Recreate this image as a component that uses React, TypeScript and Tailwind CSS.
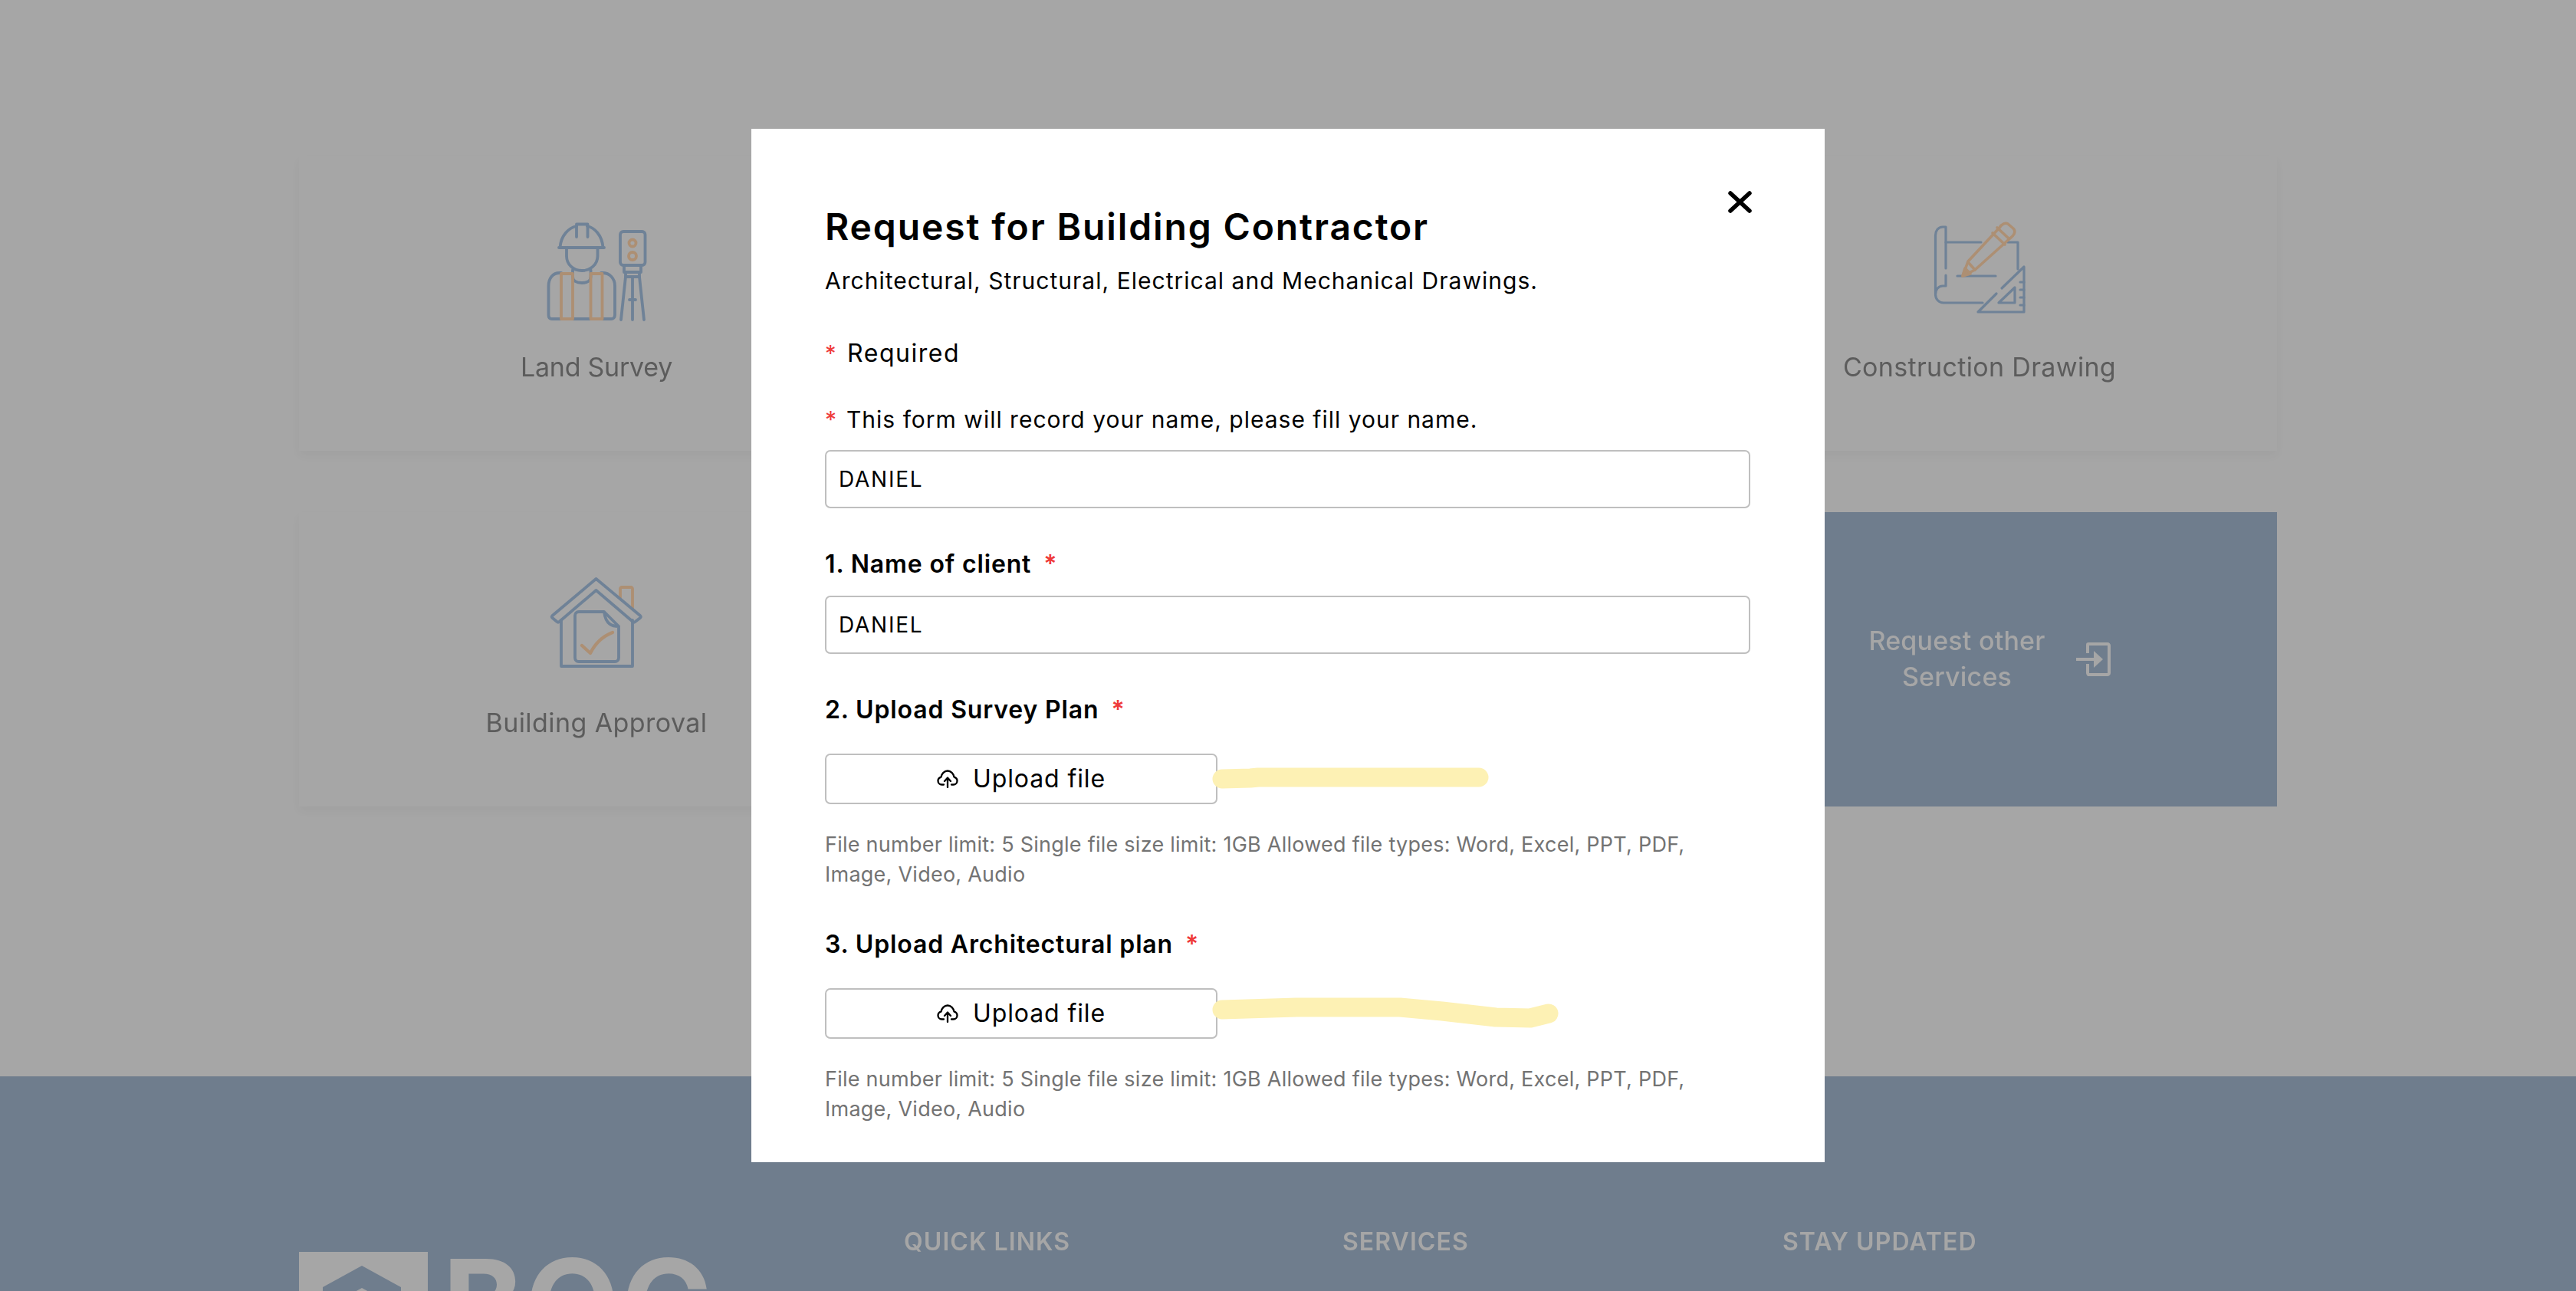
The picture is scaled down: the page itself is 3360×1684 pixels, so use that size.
import React from "react";

const B = "#6f8297";
const O = "#ad8f73";
const F = "#6f7d8d";

function SurveyIcon() {
  return (
    <svg width="134" height="133" viewBox="710 285 134 133" fill="none" strokeWidth="3.800" strokeLinecap="round" strokeLinejoin="round">
      <g stroke={B}>
        <path d="M729.500 320C730.500 304 741 294 751 292M785.500 320C784.500 304 774.500 294 765 292" />
        <path d="M751 306V289.500H765.500V306" />
        <path d="M728 320H787" />
        <path d="M738 320V331C738 342 747 350 758 350C769 350 778.500 342 778.500 331V320" />
        <path d="M746 349V358C746 363 751 366 758 366C765 366 769.500 363 769.500 358V349" />
        <path d="M731 353H729C720 353 714.500 360 714.500 370V408C714.500 411 716 413 719 413H796C799 413 801 411 801 408V370C801 360 794 353 785 353H783" />
        <rect x="808" y="299" width="32.500" height="44" rx="4" />
        <path d="M813 344V352H835V344M815 352V358H833V352" />
        <path d="M815 358L809 414M833 358L839 414M824 358V414M820 388H828" />
      </g>
      <g stroke={O}>
        <rect x="731" y="354" width="15" height="59" />
        <rect x="769.500" y="354" width="15" height="59" />
        <circle cx="824" cy="314" r="4.500" />
        <circle cx="824" cy="331" r="5" />
      </g>
    </svg>
  );
}

function HouseIcon() {
  return (
    <svg width="124" height="120" viewBox="715 750 124 120" fill="none" strokeWidth="3.800" strokeLinecap="round" strokeLinejoin="round">
      <path stroke={O} d="M808 778V766C808 765 809 764 810 764H822C823 764 824 765 824 766V792" />
      <g stroke={B}>
        <path d="M776.500 753L719.500 801C718.500 802 718.500 803 719.500 804L725.500 809C726.500 810 727.500 810 728.500 809L776.500 768L824.500 809C825.500 810 826.500 810 827.500 809L834 804C835 803 835 802 834 801Z" />
        <path d="M731 807V867H824V807" />
        <path d="M787 796H754C751 796 749 798 749 801V856C749 859 751 861 754 861H801C804 861 806 859 806 856V815C798 815 789 813 787 796L806 815" />
      </g>
      <path stroke={O} strokeWidth="4.200" d="M758 840L769 850C775 838 785 828 798 823" />
    </svg>
  );
}

function DrawingIcon() {
  return (
    <svg width="124" height="122" viewBox="2521 285 124 122" fill="none" strokeWidth="3.200" strokeLinecap="round" strokeLinejoin="round">
      <g stroke={B}>
        <path d="M2539 347V293H2535C2529 293 2525.500 298 2525.500 304V380" />
        <path d="M2539 356V370H2535C2529 370 2525.500 375 2525.500 381C2525.500 387 2530 392 2536 392H2587" />
        <path d="M2539 313H2585M2620 313H2633V348" />
        <path d="M2554 357H2604" />
        <path d="M2641 345V404H2581L2605 380M2612 373L2641 345" />
        <path d="M2629 372V392H2608Z" />
        <path d="M2636 365H2641M2636 375H2641M2636 385H2641M2636 395H2641" />
      </g>
      <g stroke={O} strokeWidth="3.600">
        <path d="M2561 357L2568 338L2609 294C2612 289 2617 287 2620 289L2627 295C2630 298 2629 302 2626 305L2577 349Z" />
        <path d="M2600 301L2616 316M2606 294L2621 308" />
        <path d="M2568 339L2577 349" />
        <path d="M2561 357L2564 347L2571 354Z" fill={O} />
      </g>
    </svg>
  );
}

function ArrowInIcon() {
  return (
    <svg width="46" height="46" viewBox="2706 837 46 46" fill="none" stroke="#a6a6a6" strokeWidth="4">
      <path strokeLinejoin="round" d="M2722 852V841C2722 840 2723 840 2723 840H2748C2749 840 2750 841 2750 842V878C2750 879 2749 880 2748 880H2723C2723 880 2722 879 2722 878V866" />
      <path d="M2707 860H2732" />
      <path fill="#a6a6a6" stroke="none" d="M2730 849L2742 860L2730 871Z" />
    </svg>
  );
}

function UploadIcon() {
  return (
    <svg width="28" height="24" viewBox="0 0 28 24" fill="none" stroke="#000" strokeWidth="2.300" strokeLinecap="round" strokeLinejoin="round">
      <path d="M9 19.500H6.500C3.500 19.500 1.500 17.200 1.500 14.500C1.500 12 3.200 10.200 5.500 9.600C6.200 5 9.800 1.500 14 1.500C18.200 1.500 21.800 5 22.500 9.600C24.800 10.200 26.500 12 26.500 14.500C26.500 17.200 24.500 19.500 21.500 19.500H19" />
      <path d="M14 23V11M10 15L14 10.500L18 15" />
    </svg>
  );
}

function Star({ className }: { className: string }) {
  return <span className={`text-[#ef3a3a] ${className}`}>*</span>;
}

function ServiceCard({ icon, label, tracking }: { icon: React.ReactNode; label: string; tracking: string }) {
  return (
    <div className="flex flex-col items-center bg-[#a6a6a6] pt-[84px] shadow-[0_6px_12px_rgba(0,0,0,0.035)]">
      <div className="flex h-[169px] items-start justify-center">{icon}</div>
      <div className={`text-[34px] leading-[44px] text-[#5c5c5c] ${tracking}`}>{label}</div>
    </div>
  );
}

function Heading({ children }: { children: React.ReactNode }) {
  return <div className="text-[32px] font-semibold leading-[44px] tracking-[1.05px] text-[#a6a6a6]">{children}</div>;
}

function Field({ className }: { className: string }) {
  return (
    <div className={`flex h-[76px] items-center rounded-[7px] border-2 border-[#bfbfbf] px-4 text-[28px] tracking-[1.75px] text-black ${className}`}>
      DANIEL
    </div>
  );
}

function Label({ text, className }: { text: string; className: string }) {
  return (
    <div className={`flex text-[32px] font-semibold leading-[44px] tracking-[0.85px] text-black ${className}`}>
      {text}
      <Star className="ml-[16px]" />
    </div>
  );
}

function UploadButton({ className, children }: { className: string; children: React.ReactNode }) {
  return (
    <div className={`relative ${className}`}>
      <div className="flex h-[66px] w-[512px] items-center justify-center gap-[19px] rounded-[7px] border-2 border-[#bfbfbf] text-[32px] tracking-[0.9px] text-black">
        <UploadIcon />
        <span>Upload file</span>
      </div>
      {children}
    </div>
  );
}

function Hint({ className }: { className: string }) {
  return (
    <p className={`w-[1180px] text-[27px] leading-[39px] tracking-[0.25px] text-[#737373] ${className}`}>
      File number limit: 5 Single file size limit: 1GB Allowed file types: Word, Excel, PPT, PDF, Image, Video, Audio
    </p>
  );
}

export default function App() {
  return (
    <div className="relative h-screen overflow-hidden bg-[#a6a6a6] font-['Inter',sans-serif]">
      <div className="flex h-full flex-col blur-[0.6px]">
        <main className="h-[1404px] shrink-0 pl-[390px] pt-[204px]">
          <div className="grid w-[2580px] grid-cols-[776px_776px_776px] grid-rows-[384px_384px] gap-x-[126px] gap-y-[80px]">
            <ServiceCard icon={<SurveyIcon />} label="Land Survey" tracking="tracking-[-0.25px]" />
            <div className="bg-[#a6a6a6] shadow-[0_6px_12px_rgba(0,0,0,0.035)]" />
            <ServiceCard icon={<DrawingIcon />} label="Construction Drawing" tracking="tracking-[0.33px]" />
            <ServiceCard icon={<HouseIcon />} label="Building Approval" tracking="tracking-[0.43px]" />
            <div className="bg-[#a6a6a6] shadow-[0_6px_12px_rgba(0,0,0,0.035)]" />
            <div className="flex items-center justify-center gap-[39px] bg-[#6f7d8d] pl-[26px]">
              <div className="pb-[3px] text-center text-[34px] font-medium leading-[47px] tracking-[0.2px] text-[#a6a6a6]">
                Request other
                <br />
                Services
              </div>
              <ArrowInIcon />
            </div>
          </div>
        </main>
        <footer className="flex flex-1 items-start bg-[#6f7d8d] pl-[390px] pt-[194px]">
          <div className="mt-[35px] flex w-[789px] items-start">
            <svg width="168" height="168" viewBox="0 0 168 168" className="shrink-0">
              <rect width="168" height="168" fill="#a6a6a6" />
              <path fill={F} d="M82 18L133 46V75L82 47L31 75V46Z" />
            </svg>
            <div className="ml-[19px] mt-[-13px] text-[160px] font-bold leading-none tracking-[2px] text-[#a6a6a6]">BOC</div>
          </div>
          <div className="w-[572px]"><Heading>QUICK LINKS</Heading></div>
          <div className="w-[574px]"><Heading>SERVICES</Heading></div>
          <div><Heading>STAY UPDATED</Heading></div>
        </footer>
      </div>

      <div className="absolute inset-0 flex items-center justify-center">
        <div className="relative h-[1348px] w-[1400px] overflow-hidden bg-white pl-[96px] pr-[97px] pt-[98px]">
          <svg width="31" height="29" viewBox="0 0 31 29" className="absolute left-[1274px] top-[81px]" stroke="#000" strokeWidth="5.500" strokeLinecap="round">
            <path d="M3 3L28 26M28 3L3 26" />
          </svg>

          <h2 className="text-[48px] font-semibold leading-[60px] tracking-[1.87px] text-black">Request for Building Contractor</h2>
          <p className="mt-[20px] text-[30px] leading-[40px] tracking-[1.02px] text-black">
            Architectural, Structural, Electrical and Mechanical Drawings.
          </p>
          <div className="mt-[53px] flex text-[32px] leading-[44px] tracking-[1.55px] text-black">
            <Star className="w-[29px] text-[29px]" />
            Required
          </div>
          <div className="mt-[44px] flex text-[30px] leading-[40px] tracking-[1px] text-black">
            <Star className="w-[28px]" />
            This form will record your name, please fill your name.
          </div>
          <Field className="mt-[20px]" />
          <Label text="1. Name of client" className="mt-[51px]" />
          <Field className="mt-[19px]" />
          <Label text="2. Upload Survey Plan" className="mt-[51px]" />
          <UploadButton className="mt-[35px]">
            <svg width="365" height="40" viewBox="0 0 365 40" className="absolute left-[505px] top-[12px]" fill="none" stroke="#fdf1b4" strokeWidth="25" strokeLinecap="round" strokeLinejoin="round">
              <path d="M13 21L50 20L60 19H348" />
            </svg>
          </UploadButton>
          <Hint className="mt-[33px]" />
          <Label text="3. Upload Architectural plan" className="mt-[50px]" />
          <UploadButton className="mt-[35px]">
            <svg width="460" height="50" viewBox="0 0 460 50" className="absolute left-[505px] top-[6px]" fill="none" stroke="#fdf1b4" strokeWidth="25" strokeLinecap="round" strokeLinejoin="round">
              <path d="M13 22L110 19L245 19L300 24L370 32L415 33L439 27" />
            </svg>
          </UploadButton>
          <Hint className="mt-[33px]" />
        </div>
      </div>
    </div>
  );
}
